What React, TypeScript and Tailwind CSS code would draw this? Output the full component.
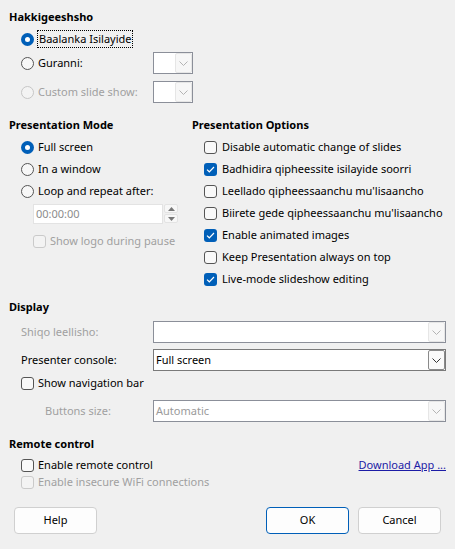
import React from 'react';

const FONT = { fontFamily: '"Noto Sans", "Open Sans", sans-serif' };

const Chevron: React.FC<{ dark?: boolean }> = ({ dark }) => (
  <svg width="9" height="5" viewBox="0 0 9 5" fill="none">
    <path d="M0.5 0.5 L4.5 4.5 L8.5 0.5" stroke={dark ? '#333' : '#b4b4b4'} strokeWidth="1" />
  </svg>
);

const Radio: React.FC<{ checked?: boolean; disabled?: boolean }> = ({ checked, disabled }) => {
  if (checked) {
    return (
      <span className="flex h-[13px] w-[13px] shrink-0 items-center justify-center rounded-full bg-[#005fb8]">
        <span className="h-[5px] w-[5px] rounded-full bg-white" />
      </span>
    );
  }
  return (
    <span
      className={`h-[13px] w-[13px] shrink-0 rounded-full border ${
        disabled ? 'border-[#c6c6c6] bg-[#f3f3f3]' : 'border-[#555] bg-[#f7f7f7]'
      }`}
    />
  );
};

const Check: React.FC<{ checked?: boolean; disabled?: boolean }> = ({ checked, disabled }) => {
  if (checked) {
    return (
      <span className="flex h-[13px] w-[13px] shrink-0 items-center justify-center rounded-[3px] bg-[#005fb8]">
        <svg width="9" height="7" viewBox="0 0 9 7" fill="none">
          <path d="M1 3.6 L3.3 5.8 L8 1" stroke="#fff" strokeWidth="1.2" />
        </svg>
      </span>
    );
  }
  return (
    <span
      className={`h-[13px] w-[13px] shrink-0 rounded-[3px] border ${
        disabled ? 'border-[#cacaca] bg-[#f3f3f3]' : 'border-[#555] bg-[#f9f9f9]'
      }`}
    />
  );
};

const Combo: React.FC<{ width?: string; value?: string; active?: boolean; disabled?: boolean }> = ({
  width = 'w-[40px]',
  value,
  active,
  disabled,
}) => (
  <div className={`flex h-[22px] ${width} shrink-0 items-center border ${active ? 'border-[#7a7a7a]' : 'border-[#8b8f99]'} bg-white`}>
    <span className={`flex-1 truncate pl-[2px] ${disabled ? 'text-[#9a9a9a]' : 'text-black'}`}>{value}</span>
    <span
      className={`flex h-[20px] w-[17px] items-center justify-center rounded-[2px] border ${
        active ? 'border-[#8a8a8a] bg-[#fafafa]' : 'border-[#e6e6e6] bg-[#f7f7f7]'
      }`}
    >
      <Chevron dark={active} />
    </span>
  </div>
);

const Heading: React.FC<{ children: React.ReactNode }> = ({ children }) => (
  <div className="h-[16px] font-bold leading-[16px]">{children}</div>
);

const Option: React.FC<{ checked?: boolean; label: string }> = ({ checked, label }) => (
  <div className="flex h-[22px] items-center gap-[5px] pl-[12px]">
    <Check checked={checked} />
    <span>{label}</span>
  </div>
);

const Button: React.FC<{ label: string; primary?: boolean }> = ({ label, primary }) => (
  <div
    className={`flex h-[27px] w-[83px] items-center justify-center rounded-[4px] border bg-[#fdfdfd] ${
      primary ? 'border-[#005fb8]' : 'border-[#d0d0d0]'
    }`}
  >
    {label}
  </div>
);

export default function App() {
  return (
    <div
      className="h-[549px] w-[455px] overflow-hidden whitespace-nowrap bg-[#f0f0f0] px-[9px] pt-[9px] text-[11px] text-black"
      style={FONT}
    >
      <Heading>Hakkigeeshsho</Heading>
      <div className="mt-[5px] flex h-[18px] items-center gap-[3px] pl-[12px]">
        <Radio checked />
        <span className="flex h-[18px] items-center border border-dotted border-black px-[1px]">Baalanka Isilayide</span>
      </div>
      <div className="mt-[4px] flex h-[22px] items-center pl-[12px]">
        <div className="flex w-[132px] items-center gap-[4px]">
          <Radio />
          <span>Guranni:</span>
        </div>
        <Combo />
      </div>
      <div className="mt-[7px] flex h-[22px] items-center pl-[12px]">
        <div className="flex w-[132px] items-center gap-[4px] text-[#a0a0a0]">
          <Radio disabled />
          <span>Custom slide show:</span>
        </div>
        <Combo />
      </div>

      <div className="mt-[14px] flex">
        <div className="w-[183px]">
          <Heading>Presentation Mode</Heading>
          <div className="mt-[3px]">
            {[
              ['Full screen', true],
              ['In a window', false],
              ['Loop and repeat after:', false],
            ].map(([label, on]) => (
              <div key={label as string} className="flex h-[22px] items-center gap-[4px] pl-[12px]">
                <Radio checked={on as boolean} />
                <span>{label as string}</span>
              </div>
            ))}
          </div>
          <div className="mt-[2px] flex h-[20px] items-center pl-[24px]">
            <div className="flex h-[20px] w-[130px] items-center border border-[#e3e3e3] bg-white pl-[2px] text-[#8c8c8c]">
              00:00:00
            </div>
            <div className="ml-[1px] flex h-[20px] w-[14px] flex-col gap-[1px]">
              <span className="flex h-[9px] items-center justify-center rounded-[2px] border border-[#e3e3e3] bg-[#f7f7f7]">
                <svg width="7" height="4" viewBox="0 0 7 4">
                  <path d="M0 4 L3.5 0 L7 4 Z" fill="#777" />
                </svg>
              </span>
              <span className="flex h-[9px] items-center justify-center rounded-[2px] border border-[#e3e3e3] bg-[#f7f7f7]">
                <svg width="7" height="4" viewBox="0 0 7 4">
                  <path d="M0 0 L3.5 4 L7 0 Z" fill="#777" />
                </svg>
              </span>
            </div>
          </div>
          <div className="mt-[6px] flex h-[22px] items-center gap-[4px] pl-[24px] text-[#a0a0a0]">
            <Check disabled />
            <span>Show logo during pause</span>
          </div>
        </div>
        <div className="flex-1">
          <Heading>Presentation Options</Heading>
          <div className="mt-[3px]">
            <Option label="Disable automatic change of slides" />
            <Option checked label="Badhidira qipheessite isilayide soorri" />
            <Option label="Leellado qipheessaanchu mu'lisaancho" />
            <Option label="Biirete gede qipheessaanchu mu'lisaancho" />
            <Option checked label="Enable animated images" />
            <Option label="Keep Presentation always on top" />
            <Option checked label="Live-mode slideshow editing" />
          </div>
        </div>
      </div>

      <div className="mt-[9px]">
        <Heading>Display</Heading>
      </div>
      <div className="mt-[6px] flex h-[22px] items-center pl-[12px]">
        <span className="w-[132px] text-[#a0a0a0]">Shiqo leellisho:</span>
        <Combo width="w-[293px]" />
      </div>
      <div className="mt-[6px] flex h-[22px] items-center pl-[12px]">
        <span className="w-[132px]">Presenter console:</span>
        <Combo width="w-[293px]" value="Full screen" active />
      </div>
      <div className="mt-[1px] flex h-[22px] items-center gap-[4px] pl-[12px]">
        <Check />
        <span>Show navigation bar</span>
      </div>
      <div className="mt-[6px] flex h-[22px] items-center pl-[36px]">
        <span className="w-[108px] text-[#a0a0a0]">Buttons size:</span>
        <Combo width="w-[293px]" value="Automatic" disabled />
      </div>

      <div className="mt-[14px]">
        <Heading>Remote control</Heading>
      </div>
      <div className="mt-[4px] flex h-[18px] items-center pl-[12px]">
        <div className="flex items-center gap-[4px]">
          <Check />
          <span>Enable remote control</span>
        </div>
        <a className="ml-auto text-[#1c1ca6] underline">Download App ...</a>
      </div>
      <div className="flex h-[16px] items-center gap-[4px] pl-[12px] text-[#a0a0a0]">
        <Check disabled />
        <span>Enable insecure WiFi connections</span>
      </div>

      <div className="mt-[17px] flex items-center px-[5px]">
        <Button label="Help" />
        <div className="ml-auto flex gap-[9px]">
          <Button label="OK" primary />
          <Button label="Cancel" />
        </div>
      </div>
    </div>
  );
}
